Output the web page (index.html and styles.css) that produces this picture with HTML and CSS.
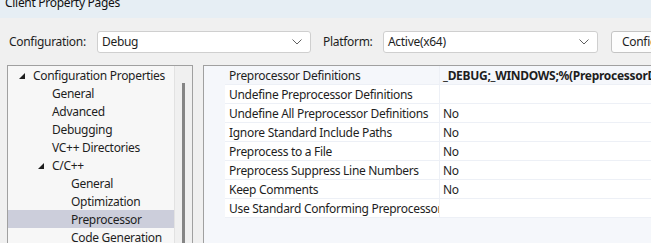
FILE: index.html
```html
<!DOCTYPE html>
<html lang="en">
<head>
    <meta charset="UTF-8">
    <title>Client Property Pages</title>
    <link rel="stylesheet" href="styles.css">
</head>
<body>
    <div class="window">
        <div class="titlebar"><span class="title">Client Property Pages</span></div>

        <div class="toolbar">
            <label class="field-label label-config">Configuration:</label>
            <div class="combo combo-config">
                <span>Debug</span>
                <svg class="chevron" width="10" height="6" viewBox="0 0 10 6"><path d="M0.5 0.5 L5 5 L9.5 0.5" fill="none" stroke="#606060" stroke-width="1"/></svg>
            </div>
            <label class="field-label label-platform">Platform:</label>
            <div class="combo combo-platform">
                <span>Active(x64)</span>
                <svg class="chevron" width="10" height="6" viewBox="0 0 10 6"><path d="M0.5 0.5 L5 5 L9.5 0.5" fill="none" stroke="#606060" stroke-width="1"/></svg>
            </div>
            <button class="btn">Configuration Manager...</button>
        </div>

        <div class="main">
            <div class="tree">
                <ul class="tree-list">
                    <li class="lvl0"><svg class="arrow" width="6" height="6" viewBox="0 0 6 6"><polygon points="6,0 6,6 0,6" fill="#1e1e1e"/></svg>Configuration Properties</li>
                    <li class="lvl1">General</li>
                    <li class="lvl1">Advanced</li>
                    <li class="lvl1">Debugging</li>
                    <li class="lvl1">VC++ Directories</li>
                    <li class="lvl1 parent"><svg class="arrow" width="6" height="6" viewBox="0 0 6 6"><polygon points="6,0 6,6 0,6" fill="#1e1e1e"/></svg>C/C++</li>
                    <li class="lvl2">General</li>
                    <li class="lvl2">Optimization</li>
                    <li class="lvl2 selected">Preprocessor</li>
                    <li class="lvl2">Code Generation</li>
                </ul>
                <div class="scrollbar"><div class="thumb"></div></div>
            </div>

            <div class="grid">
                <div class="row current">
                    <div class="name">Preprocessor Definitions</div>
                    <div class="value bold">_DEBUG;_WINDOWS;%(PreprocessorDefinitions)</div>
                </div>
                <div class="row">
                    <div class="name">Undefine Preprocessor Definitions</div>
                    <div class="value"></div>
                </div>
                <div class="row">
                    <div class="name">Undefine All Preprocessor Definitions</div>
                    <div class="value">No</div>
                </div>
                <div class="row">
                    <div class="name">Ignore Standard Include Paths</div>
                    <div class="value">No</div>
                </div>
                <div class="row">
                    <div class="name">Preprocess to a File</div>
                    <div class="value">No</div>
                </div>
                <div class="row">
                    <div class="name">Preprocess Suppress Line Numbers</div>
                    <div class="value">No</div>
                </div>
                <div class="row">
                    <div class="name">Keep Comments</div>
                    <div class="value">No</div>
                </div>
                <div class="row">
                    <div class="name">Use Standard Conforming Preprocessor</div>
                    <div class="value"></div>
                </div>
            </div>
        </div>
    </div>
</body>
</html>
```

FILE: styles.css
```css
body {
    margin: 0;
    font-family: "Segoe UI", "Noto Sans", sans-serif;
    font-size: 12px;
    letter-spacing: -0.3px;
    color: #1e1e1e;
    background-color: #f0f0f0;
}
.window {
    width: 651px;
    height: 243px;
    overflow: hidden;
}
.titlebar {
    height: 18px;
    background-color: #e6eef4;
    overflow: hidden;
}
.title {
    display: block;
    margin-top: -6px;
    padding-left: 5px;
    line-height: 18px;
    color: #111;
}
.toolbar {
    display: flex;
    align-items: center;
    height: 47px;
    white-space: nowrap;
    overflow: hidden;
}
.toolbar > * {
    flex: none;
}
.field-label {
    line-height: 22px;
}
.label-config {
    margin-left: 9px;
    width: 88px;
}
.label-platform {
    margin-left: 12px;
    width: 60px;
}
.combo {
    box-sizing: border-box;
    height: 22px;
    display: flex;
    align-items: center;
    justify-content: space-between;
    padding: 0 8px 0 4px;
    background-color: #fff;
    border: 1px solid #cfcfcf;
    border-radius: 3px;
}
.combo-config {
    width: 214px;
}
.combo-platform {
    width: 215px;
}
.chevron {
    display: block;
}
.btn {
    box-sizing: border-box;
    margin-left: 13px;
    height: 22px;
    padding: 0 10px;
    font-family: inherit;
    font-size: 12px;
    letter-spacing: -0.3px;
    color: #1e1e1e;
    background-color: #fdfdfd;
    border: 1px solid #c4c4c4;
    border-radius: 3px;
    white-space: nowrap;
}
.main {
    display: flex;
    align-items: flex-start;
}
.tree {
    flex: none;
    box-sizing: border-box;
    margin-left: 7px;
    width: 186px;
    height: 200px;
    display: flex;
    background-color: #f7f7f7;
    border: 1px solid #a0a0a0;
    border-bottom: none;
}
.tree-list {
    flex: none;
    list-style: none;
    margin: 0;
    padding: 0;
    width: 166px;
}
.tree-list li {
    box-sizing: border-box;
    height: 18px;
    padding-top: 2px;
    line-height: 16px;
    white-space: nowrap;
    display: flex;
    align-items: center;
}
.arrow {
    margin-right: 8px;
    flex: none;
}
.lvl0 {
    padding-left: 11px;
}
.lvl1 {
    padding-left: 44px;
}
.lvl1.parent {
    padding-left: 30px;
}
.lvl2 {
    padding-left: 63px;
}
.selected {
    background-color: #cccedb;
}
.scrollbar {
    flex: 1;
    border-left: 1px solid #e2e2e2;
    background-color: #f0f0f0;
    display: flex;
    justify-content: center;
    padding-top: 17px;
}
.thumb {
    width: 3px;
    height: 200px;
    background-color: #858585;
}
.grid {
    box-sizing: border-box;
    margin-left: 10px;
    flex: 1;
    min-width: 0;
    height: 200px;
    padding-left: 21px;
    background-color: #f5f7fb;
    border: 1px solid #a0a0a0;
    border-bottom: none;
    border-right: none;
}
.row {
    display: flex;
    height: 19px;
    box-sizing: border-box;
    border-bottom: 1px solid #edf0f6;
    background-color: #fff;
}
.row.current {
    background-color: #f5f7fb;
}
.name {
    flex: none;
    box-sizing: border-box;
    width: 215px;
    padding-left: 4px;
    padding-top: 2px;
    line-height: 16px;
    white-space: nowrap;
    overflow: hidden;
    border-right: 1px solid #edf0f6;
}
.value {
    flex: 1;
    min-width: 0;
    padding-left: 3px;
    padding-top: 2px;
    line-height: 16px;
    white-space: nowrap;
    overflow: hidden;
}
.bold {
    font-weight: bold;
}
```
